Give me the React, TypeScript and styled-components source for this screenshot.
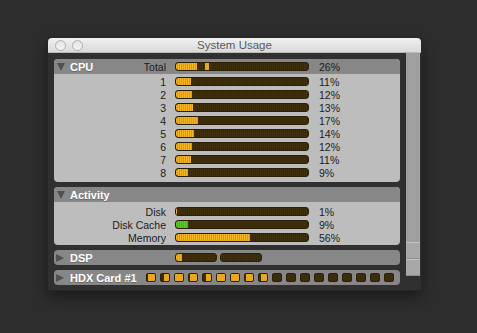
import React from "react";
import styled, { createGlobalStyle } from "styled-components";

const Global = createGlobalStyle`
  html, body { margin: 0; padding: 0; background: #2d2d2d; }
  body { font-family: "Liberation Sans", Arial, sans-serif; }
`;

const Page = styled.div`
  width: 477px;
  height: 333px;
  box-sizing: border-box;
  padding: 38px 0 0 48px;
`;

const Window = styled.div`
  width: 373px;
  height: 252px;
  display: flex;
  flex-direction: column;
  background: #303030;
  border-radius: 4px 4px 0 0;
  box-shadow: 0 0 0 1px #262626, 0 6px 14px rgba(0, 0, 0, 0.45);
`;

const TitleBar = styled.div`
  height: 15px;
  flex: none;
  display: grid;
  grid-template-columns: 1fr auto 1fr;
  align-items: center;
  background: linear-gradient(#f0f0f0, #dadada);
  border-bottom: 1px solid #b9b9b9;
  border-radius: 4px 4px 0 0;
  box-sizing: border-box;
`;

const Lights = styled.div`
  display: flex;
  gap: 6px;
  padding-left: 7px;
`;

const Light = styled.span`
  width: 11px;
  height: 11px;
  box-sizing: border-box;
  border-radius: 50%;
  border: 1px solid #b0b0b0;
  background: linear-gradient(#e4e4e4, #f4f4f4);
`;

const Title = styled.div`
  font-size: 11.5px;
  color: #5a5a5a;
  line-height: 15px;
`;

const Body = styled.div`
  flex: 1;
  display: flex;
  min-height: 0;
`;

const Content = styled.div`
  flex: 1;
  display: flex;
  flex-direction: column;
  gap: 5px;
  padding: 6px 6px 4px 6px;
`;

const Scroll = styled.div`
  width: 14px;
  margin: 0 1px 14px 0;
  background: #a0a0a0;
  display: flex;
  flex-direction: column;
  justify-content: flex-end;
`;

const ScrollButton = styled.div`
  height: 17px;
  box-sizing: border-box;
  border-top: 1px solid #c4c4c4;
  border-bottom: 1px solid #8e8e8e;
  background: #a8a8a8;
`;

const Panel = styled.div`
  border-radius: 4px;
  overflow: hidden;
  background: #bdbdbd;
`;

const cols = `
  display: grid;
  grid-template-columns: 112px 134px auto;
  column-gap: 9px;
  align-items: center;
`;

const Header = styled.div`
  ${cols}
  height: 15px;
  background: #878787;
`;

const HdxHeader = styled.div`
  display: grid;
  grid-template-columns: 92px auto;
  align-items: center;
  height: 15px;
  background: #878787;
`;

const HeaderLeft = styled.div`
  display: flex;
  align-items: center;
  height: 15px;
`;

const Triangle = styled.span<{ $open: boolean }>`
  width: 0;
  height: 0;
  margin-left: 3px;
  margin-right: 5px;
  ${(p) =>
    p.$open
      ? `border-left: 4.5px solid transparent; border-right: 4.5px solid transparent; border-top: 8px solid #505050; margin-top: 1px;`
      : `border-top: 4px solid transparent; border-bottom: 4px solid transparent; border-left: 8px solid #505050; margin-right: 6px; margin-left: 2px;`}
`;

const Name = styled.span`
  font-weight: bold;
  font-size: 11px;
  color: #ffffff;
  text-shadow: 0 1px 0 rgba(0, 0, 0, 0.25);
`;

const Label = styled.span`
  margin-left: auto;
  font-size: 10.5px;
  color: #1c1c1c;
  text-align: right;
`;

const RowList = styled.div<{ $pt: number; $pb: number }>`
  padding: ${(p) => p.$pt}px 0 ${(p) => p.$pb}px 0;
`;

const Row = styled.div`
  ${cols}
  height: 13px;
`;

const RowLabel = styled.span`
  font-size: 10.5px;
  color: #1c1c1c;
  text-align: right;
`;

const Pct = styled.span`
  font-size: 10.5px;
  color: #1c1c1c;
  padding-left: 1px;
`;

const Track = styled.div<{ $w?: number }>`
  position: relative;
  width: ${(p) => (p.$w ? `${p.$w}px` : "134px")};
  height: 9px;
  box-sizing: border-box;
  border: 1px solid #2b1f07;
  border-radius: 3px;
  overflow: hidden;
  background: repeating-linear-gradient(90deg, #41300d 0 1px, #37280a 1px 2px);
`;

const Fill = styled.div<{ $green?: boolean }>`
  height: 100%;
  border-radius: 2px 0 0 2px;
  background: ${(p) =>
    p.$green
      ? "repeating-linear-gradient(90deg, #5ccc2c 0 1px, #48b21e 1px 2px)"
      : "repeating-linear-gradient(90deg, #f2b424 0 1px, #d99b16 1px 2px)"};
`;

const Peak = styled.div`
  position: absolute;
  top: 0;
  bottom: 0;
  width: 4px;
  background: #eaa81c;
`;

const BarPair = styled.div`
  display: flex;
  gap: 3px;
`;

const Chips = styled.div`
  display: flex;
  gap: 4px;
`;

const Chip = styled.div`
  position: relative;
  width: 10px;
  height: 9px;
  box-sizing: border-box;
  border-radius: 2px;
  border: 1px solid #2b1f07;
  background: #3d2c0b;
  overflow: hidden;
  display: flex;
  justify-content: flex-end;
`;

const ChipFill = styled.div`
  height: 100%;
  background: #e9a71d;
`;

function Bar({ v, green, peak, w }: { v: number; green?: boolean; peak?: number; w?: number }) {
  return (
    <Track $w={w}>
      <Fill $green={green} style={{ width: `${v}%` }} />
      {peak !== undefined && <Peak style={{ left: `${peak}px` }} />}
    </Track>
  );
}

const cpu = [
  ["1", 11],
  ["2", 12],
  ["3", 13],
  ["4", 17],
  ["5", 14],
  ["6", 12],
  ["7", 11],
  ["8", 9],
] as const;

const activity = [
  ["Disk", 1, false],
  ["Disk Cache", 9, true],
  ["Memory", 56, false],
] as const;

const chips = [7, 5, 8, 7, 5, 8, 8, 7, 6, 0, 0, 0, 0, 0, 0, 0, 0, 0];

export default function App() {
  return (
    <>
      <Global />
      <Page>
        <Window>
          <TitleBar>
            <Lights>
              <Light />
              <Light />
            </Lights>
            <Title>System Usage</Title>
            <span />
          </TitleBar>
          <Body>
            <Content>
              <Panel>
                <Header>
                  <HeaderLeft>
                    <Triangle $open />
                    <Name>CPU</Name>
                    <Label>Total</Label>
                  </HeaderLeft>
                  <Bar v={16} peak={29} />
                  <Pct>26%</Pct>
                </Header>
                <RowList $pt={1} $pb={3}>
                  {cpu.map(([l, v]) => (
                    <Row key={l}>
                      <RowLabel>{l}</RowLabel>
                      <Bar v={v} />
                      <Pct>{v}%</Pct>
                    </Row>
                  ))}
                </RowList>
              </Panel>
              <Panel>
                <Header>
                  <HeaderLeft>
                    <Triangle $open />
                    <Name>Activity</Name>
                  </HeaderLeft>
                </Header>
                <RowList $pt={3} $pb={1}>
                  {activity.map(([l, v, g]) => (
                    <Row key={l}>
                      <RowLabel>{l}</RowLabel>
                      <Bar v={v} green={g} />
                      <Pct>{v}%</Pct>
                    </Row>
                  ))}
                </RowList>
              </Panel>
              <Panel>
                <Header>
                  <HeaderLeft>
                    <Triangle $open={false} />
                    <Name>DSP</Name>
                  </HeaderLeft>
                  <BarPair>
                    <Bar v={16} w={42} />
                    <Bar v={0} w={42} />
                  </BarPair>
                </Header>
              </Panel>
              <Panel>
                <HdxHeader>
                  <HeaderLeft>
                    <Triangle $open={false} />
                    <Name>HDX Card #1</Name>
                  </HeaderLeft>
                  <Chips>
                    {chips.map((c, i) => (
                      <Chip key={i}>
                        <ChipFill style={{ width: `${c}px` }} />
                      </Chip>
                    ))}
                  </Chips>
                </HdxHeader>
              </Panel>
            </Content>
            <Scroll>
              <ScrollButton />
              <ScrollButton />
            </Scroll>
          </Body>
        </Window>
      </Page>
    </>
  );
}
